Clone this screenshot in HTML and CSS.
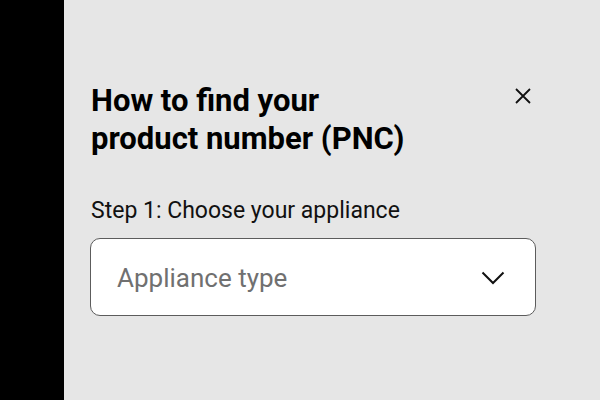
FILE: index.html
```html
<!DOCTYPE html>
<html>
<head>
<meta charset="utf-8">
<link rel="stylesheet" href="styles.css">
</head>
<body>
<div class="page">
  <div class="backdrop"></div>
  <div class="panel">
    <div class="header">
      <h1 class="title">How to find your<br>product number (PNC)</h1>
      <button class="close" aria-label="Close">
        <svg width="16" height="16" viewBox="0 0 16 16"><path d="M1 1L15 15M15 1L1 15" stroke="#111" stroke-width="1.8" fill="none"/></svg>
      </button>
    </div>
    <div class="step">Step 1: Choose your appliance</div>
    <div class="select">
      <span class="placeholder">Appliance type</span>
      <svg class="chev" width="24" height="14" viewBox="0 0 24 14"><path d="M1.5 1.5L12 12L22.5 1.5" stroke="#111" stroke-width="2" fill="none"/></svg>
    </div>
  </div>
</div>
</body>
</html>
```
FILE: styles.css
```css
html, body { margin: 0; padding: 0; }
body { width: 600px; height: 400px; overflow: hidden; font-family: Roboto, "Liberation Sans", sans-serif; }
.page { display: flex; height: 400px; }
.backdrop { width: 64px; background: #000; flex: none; }
.panel { flex: 1; background: #e6e6e6; padding: 82px 64px 0 27px; box-sizing: border-box; }
.header { display: flex; justify-content: space-between; align-items: flex-start; }
.title { margin: 0; font-size: 31px; line-height: 38px; font-weight: 700; color: #000; }
.close { border: 0; background: none; padding: 0; margin: 6px 5px 0 0; width: 16px; height: 16px; display: block; }
.close svg { display: block; }
.step { margin-top: 39px; font-size: 23px; line-height: 28px; color: #111; }
.select { margin-top: 13px; margin-left: -1px; height: 78px; box-sizing: border-box; border: 1.5px solid #5c5c5c; border-radius: 10px; background: #fff; display: flex; align-items: center; justify-content: space-between; padding: 2px 30px 0 26px; }
.placeholder { font-size: 26px; color: #707070; }
.chev { display: block; margin-top: -1px; }
```
